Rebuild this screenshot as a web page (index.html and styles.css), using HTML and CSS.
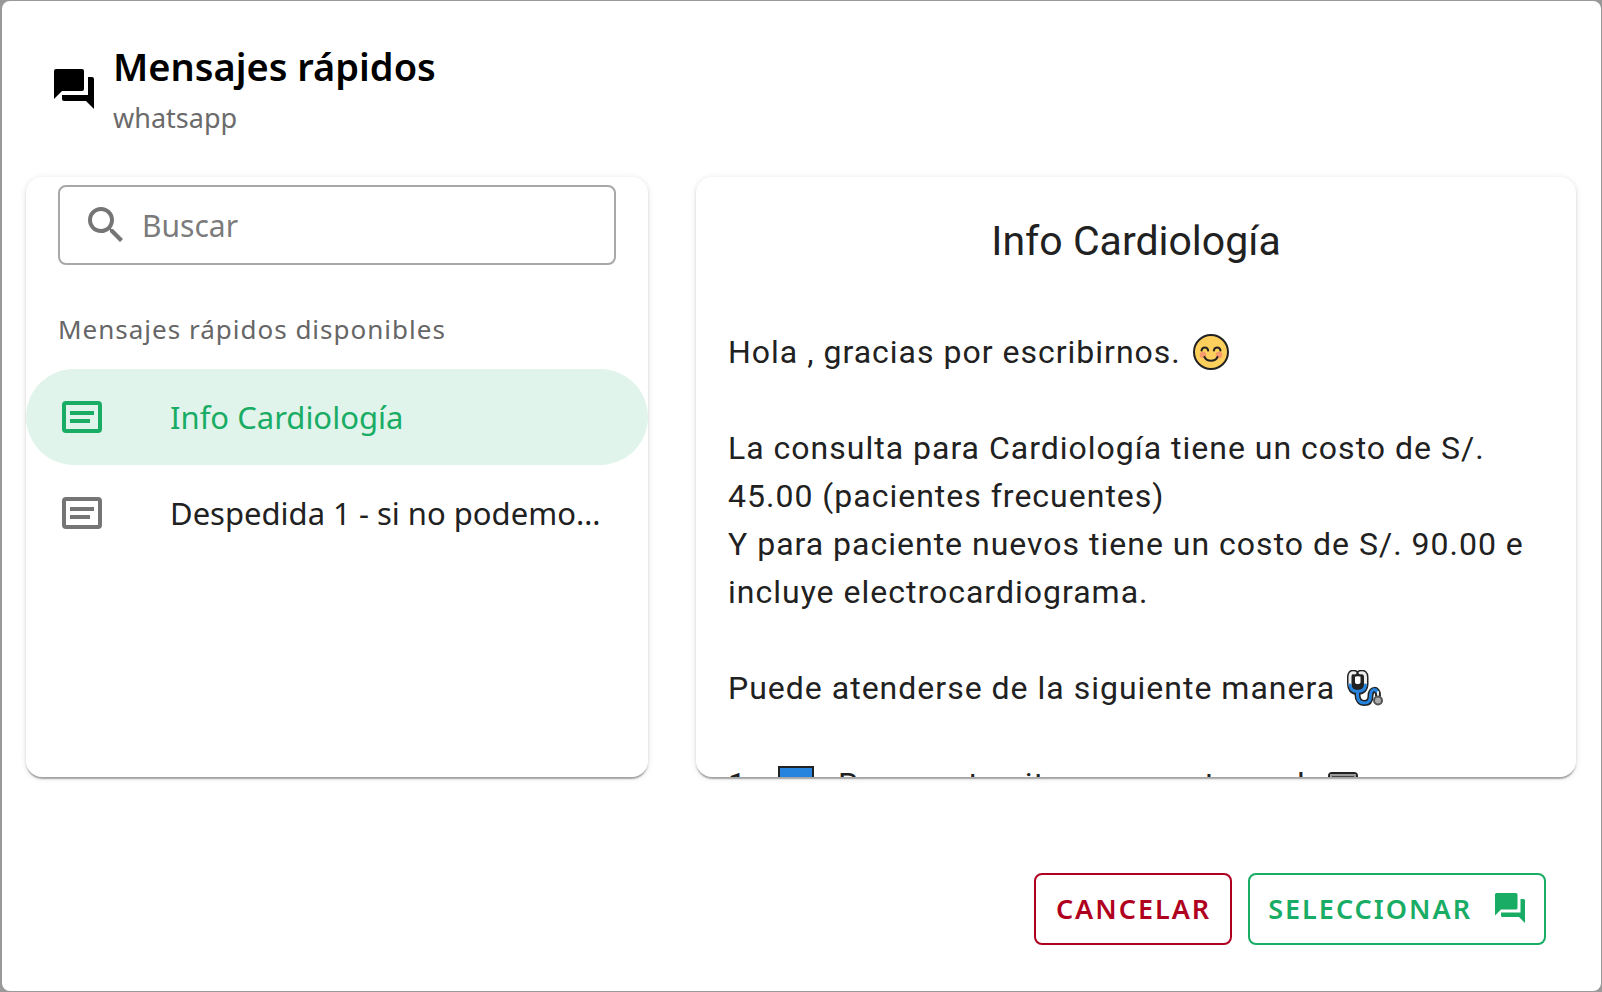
FILE: index.html
```html
<!DOCTYPE html>
<html lang="es">
<head>
<meta charset="utf-8">
<title>Mensajes rápidos</title>
<link rel="stylesheet" href="styles.css">
</head>
<body>
<svg class="defs" aria-hidden="true">
  <symbol id="forum" viewBox="0 0 24 24"><path fill="currentColor" d="M17,12V3A1,1 0 0,0 16,2H3A1,1 0 0,0 2,3V17L6,13H16A1,1 0 0,0 17,12M21,6H19V15H6V17A1,1 0 0,0 7,18H18L22,22V7A1,1 0 0,0 21,6Z"/></symbol>
  <symbol id="note" viewBox="0 0 24 24"><path fill="currentColor" d="M20,20H4A2,2 0 0,1 2,18V6A2,2 0 0,1 4,4H20A2,2 0 0,1 22,6V18A2,2 0 0,1 20,20M4,6V18H20V6H4M6,9H18V11H6V9M6,13H16V15H6V13Z"/></symbol>
  <symbol id="search" viewBox="0 0 24 24"><path fill="currentColor" d="M9.5,3A6.5,6.5 0 0,1 16,9.5C16,11.11 15.41,12.59 14.44,13.73L14.71,14H15.5L20.5,19L19,20.5L14,15.5V14.71L13.73,14.44C12.59,15.41 11.11,16 9.5,16A6.5,6.5 0 0,1 3,9.5A6.5,6.5 0 0,1 9.5,3M9.5,5C7,5 5,7 5,9.5C5,12 7,14 9.5,14C12,14 14,12 14,9.5C14,7 12,5 9.5,5Z"/></symbol>
</svg>
<main class="dialog">
  <header class="header">
    <svg class="header-icon"><use href="#forum"/></svg>
    <div class="heading">
      <h1 class="title">Mensajes rápidos</h1>
      <p class="subtitle">whatsapp</p>
    </div>
  </header>
  <div class="panels">
    <section class="card list-card">
      <label class="search">
        <svg class="search-icon"><use href="#search"/></svg>
        <input class="search-input" type="text" placeholder="Buscar" aria-label="Buscar">
      </label>
      <h2 class="list-title">Mensajes rápidos disponibles</h2>
      <button class="item item-active" type="button"><svg class="item-icon"><use href="#note"/></svg><span class="item-text">Info Cardiología</span></button>
      <button class="item" type="button"><svg class="item-icon"><use href="#note"/></svg><span class="item-text">Despedida 1 - si no podemos atender</span></button>
    </section>
    <section class="card preview">
      <h2 class="preview-title">Info Cardiología</h2>
      <div class="message">
      <p class="line">Hola , gracias por escribirnos. <svg class="emoji" viewBox="0 0 36 36" role="img" aria-label="cara sonriente"><circle cx="18" cy="18" r="17" fill="#fdcf5c" stroke="#222" stroke-width="2"/><circle cx="10" cy="21" r="3.3" fill="#f79a6c"/><circle cx="26" cy="21" r="3.3" fill="#f79a6c"/><path d="M8.500 16.500c.7-4 6-4 6.700 0M20.800 16.500c.7-4 6-4 6.700 0M11.500 23c2.500 5 10.500 5 13 0" fill="none" stroke="#222" stroke-width="2" stroke-linecap="round"/></svg></p>
      <p class="line">La consulta para Cardiología tiene un costo de S/. 45.00 (pacientes frecuentes)<br>Y para paciente nuevos tiene un costo de S/. 90.00 e incluye electrocardiograma.</p>
      <p class="line">Puede atenderse de la siguiente manera <svg class="emoji" viewBox="0 0 36 36" role="img" aria-label="estetoscopio"><g fill="none" stroke-linecap="round" stroke-linejoin="round"><path d="M8 3C4 2 3 4 3 7v7c0 5 2.500 8 7.500 8s8-3 8-8V7c0-3-1.500-5-5.500-4" fill="#222"/><path d="M8 3C4 2 3 4 3 7v7c0 5 2.500 8 7.500 8s8-3 8-8V7c0-3-1.500-5-5.500-4M10.500 22v3c0 5 2.500 8 7 8s6-3 6-7c0-8 7.500-8 7.500-1" stroke="#222" stroke-width="6"/><path d="M8 3C4 2 3 4 3 7v8M18.500 15V7c0-3-1.500-5-5.500-4" stroke="#eee" stroke-width="3"/><path d="M3 15c.5 4 3 6.500 7.500 6.500s7.500-2.500 8-6.500M10.500 22v3c0 5 2.500 8 7 8s6-3 6-7c0-7 5-8 7-4" stroke="#2684df" stroke-width="3"/><path d="M31 22v5" stroke="#eee" stroke-width="2"/><path d="M7 6v6c0 4 7.500 4 7.500 0V6l-3.500-1z" fill="#fff" stroke="#222" stroke-width="2"/></g><circle cx="31" cy="30.500" r="4" fill="#aaa" stroke="#555" stroke-width="2"/></svg></p>
      <p class="line">1.- <svg class="emoji emoji-box" viewBox="0 0 36 36" role="img" aria-label="cuadro azul"><path d="M1 1h34v34H1z" fill="#2684df" stroke="#222" stroke-width="2"/></svg>&nbsp; Reserva tu cita por nuestra web <svg class="emoji emoji-tight" viewBox="0 0 36 36" role="img" aria-label="computadora"><rect x="4" y="7" width="28" height="22" rx="3" fill="#444" stroke="#222" stroke-width="2"/><rect x="6" y="9" width="24" height="20" fill="none" stroke="#999" stroke-width="2"/></svg></p>
      </div>
    </section>
  </div>
  <footer class="actions">
    <button class="btn btn-cancel" type="button">CANCELAR</button>
    <button class="btn btn-select" type="button">SELECCIONAR <svg class="btn-icon"><use href="#forum"/></svg></button>
  </footer>
</main>
</body>
</html>
```
FILE: styles.css
```css
* { box-sizing: border-box; }
body {
  margin: 0;
  min-height: 100vh;
  display: flex;
  padding: 1px 1px 1px 2px;
  background: #999;
  color: #212121;
  font-family: "Noto Sans", sans-serif;
}
h1, h2, p { margin: 0; font-weight: 400; }
svg { flex: none; }
.defs { position: absolute; width: 0; height: 0; }
.dialog {
  flex: 1;
  min-width: 0;
  display: flex;
  flex-direction: column;
  padding: 32px 25px 46px 24px;
  background: #fff;
  border-radius: 8px;
}
.header {
  display: flex;
  align-items: center;
  gap: 15px;
  height: 112px;
  padding-left: 24px;
  color: #000;
}
.heading { padding-bottom: 6px; }
.header-icon { width: 48px; height: 48px; }
.title { font-size: 38px; line-height: 64px; font-weight: 600; }
.subtitle { font-size: 27px; line-height: 40px; color: #6b6b6b; }
.panels {
  display: grid;
  grid-template-columns: 622fr 880fr;
  gap: 48px;
  margin-top: 32px;
}
.card {
  height: 600px;
  min-width: 0;
  overflow: hidden;
  border-radius: 16px;
  background: #fff;
  box-shadow: 0 3px 1px -1px rgba(0,0,0,.2), 0 2px 2px rgba(0,0,0,.14), 0 1px 6px rgba(0,0,0,.12);
}
.search {
  display: flex;
  align-items: center;
  gap: 12px;
  height: 80px;
  margin: 8px 32px 0;
  padding: 0 22px;
  border: 2px solid #a8a8a8;
  border-radius: 8px;
}
.search-icon { width: 48px; height: 48px; color: #757575; }
.search-input {
  flex: 1;
  min-width: 0;
  border: 0;
  outline: 0;
  padding: 0;
  background: none;
  font: 30px "Noto Sans", sans-serif;
}
.search-input::placeholder { color: #7b7b7b; opacity: 1; }
.list-title {
  margin: 40px 32px 0;
  font-size: 26px;
  line-height: 48px;
  letter-spacing: 1px;
  color: #666;
}
.item {
  display: flex;
  align-items: center;
  gap: 64px;
  width: 100%;
  height: 96px;
  padding: 0 40px 0 32px;
  border: 0;
  border-radius: 48px;
  background: none;
  color: #212121;
  font: 31px "Noto Sans", sans-serif;
  text-align: left;
}
.list-title + .item { margin-top: 16px; }
.item-icon { width: 48px; height: 48px; color: #757575; }
.item-text { min-width: 0; overflow: hidden; text-overflow: ellipsis; white-space: nowrap; }
.item-active { background: #e1f4eb; color: #18ac64; }
.item-active .item-icon { color: inherit; }
.preview { padding: 32px 32px 0; font-family: Roboto, sans-serif; }
.preview-title { font-size: 41px; line-height: 64px; text-align: center; }
.message { padding-top: 7px; }
.line { margin-top: 48px; font-size: 32px; line-height: 48px; letter-spacing: 1px; }
.emoji { width: 36px; height: 36px; margin-left: 3px; vertical-align: -7px; }
.emoji-box { margin-right: 6px; }
.emoji-tight { margin-left: 0; }
.actions {
  display: flex;
  justify-content: flex-end;
  gap: 16px;
  margin-top: auto;
  padding-right: 30px;
}
.btn {
  display: flex;
  align-items: center;
  height: 72px;
  padding: 0 18px 2px;
  border: 2px solid;
  border-radius: 8px;
  background: none;
  font: 600 27px "Noto Sans", sans-serif;
  letter-spacing: 2px;
}
.btn-cancel { padding: 0 19px 2px 20px; color: #b00020; }
.btn-select { gap: 20px; padding-right: 16px; color: #18ac64; }
.btn-icon { width: 36px; height: 36px; }
```
